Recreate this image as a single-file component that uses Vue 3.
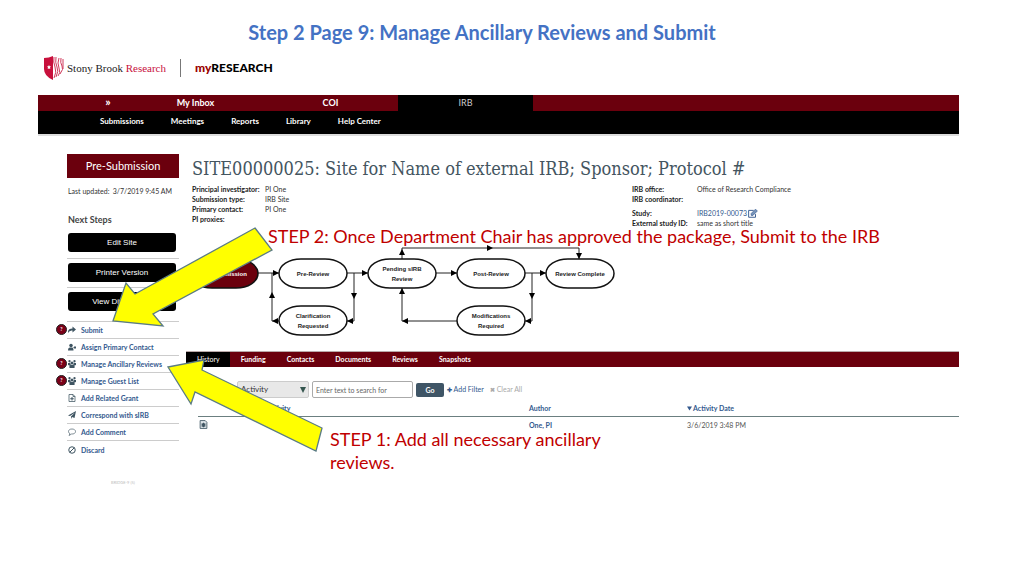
<script setup>
import { ref } from 'vue'

const mainTabs = ['My Inbox', 'COI', 'IRB']
const menu = ['Submissions', 'Meetings', 'Reports', 'Library', 'Help Center']
const steps = ['Edit Site', 'Printer Version', 'View Differences']
const actions = [
  { label: 'Submit', icon: 'share', help: true },
  { label: 'Assign Primary Contact', icon: 'userplus' },
  { label: 'Manage Ancillary Reviews', icon: 'users', help: true },
  { label: 'Manage Guest List', icon: 'users', help: true },
  { label: 'Add Related Grant', icon: 'fileplus' },
  { label: 'Correspond with sIRB', icon: 'plane' },
  { label: 'Add Comment', icon: 'comment' },
  { label: 'Discard', icon: 'ban' }
]
const leftFacts = [
  ['Principal investigator:', 'PI One'],
  ['Submission type:', 'IRB Site'],
  ['Primary contact:', 'PI One'],
  ['PI proxies:', '']
]
const nodes = [
  { x: 190, y: 259, lines: ['Pre-Submission'], active: true },
  { x: 279, y: 259, lines: ['Pre-Review'] },
  { x: 279, y: 306, lines: ['Clarification', 'Requested'] },
  { x: 368, y: 259, lines: ['Pending sIRB', 'Review'] },
  { x: 457, y: 259, lines: ['Post-Review'] },
  { x: 457, y: 306, lines: ['Modifications', 'Required'] },
  { x: 546, y: 259, lines: ['Review Complete'] }
]
const heads = [
  [279, 273, 0], [272, 292, 270], [272, 321, 180], [368, 273, 0], [354, 299, 90], [347, 321, 180],
  [402, 249, 270], [493, 248, 0], [579, 259, 90], [457, 273, 0], [546, 273, 0], [532, 299, 90],
  [525, 321, 180], [402, 321, 180], [402, 288, 270]
]
const tabs = ['History', 'Funding', 'Contacts', 'Documents', 'Reviews', 'Snapshots']
const field = ref('Activity')
const query = ref('')
</script>

<template>
  <div class="slide">
    <h1 class="slide-title">Step 2 Page 9: Manage Ancillary Reviews and Submit</h1>
    <div class="site">
      <header class="brand">
        <svg class="shield" viewBox="0 0 20 24" aria-hidden="true">
          <path d="M0 2Q5 2 9 0V24Q0 20 0 13Z" fill="#c8103c" />
          <path d="M9 0Q14 2 19 2V13Q19 20 9 24Z" fill="#fff" />
          <path d="M10 1Q9 6 11 11T10 22M12 1Q11 7 13 11T12 21M15 2Q13 7 15 12T14 20M17 2Q16 7 18 10T16 18M19 3V13" fill="none" stroke="#d03a5c" />
          <path d="M5 9l.7 1.300 1.300.2-1 1 .3 1.500L5 12.400 3.700 13 4 11.500 3 10.500 4.300 10.300Z" fill="#fff" />
        </svg>
        <span class="sb">Stony Brook <span>Research</span></span>
        <span class="my"><span>my</span>RESEARCH</span>
      </header>
      <nav class="topnav">
        <a href="#" class="expand">»</a>
        <a v-for="t in mainTabs" :key="t" href="#" :class="{ on: t === 'IRB' }">{{ t }}</a>
      </nav>
      <nav class="subnav">
        <a v-for="m in menu" :key="m" href="#">{{ m }}</a>
      </nav>
      <div class="body">
        <aside class="side">
          <div class="state">Pre-Submission</div>
          <div class="updated"><span>Last updated:</span><span>3/7/2019 9:45 AM</span></div>
          <h2>Next Steps</h2>
          <div v-for="s in steps" :key="s" class="step"><button type="button">{{ s }}</button></div>
          <ul class="actions">
            <li v-for="a in actions" :key="a.label">
              <span v-if="a.help" class="help">?</span>
              <svg class="ico" viewBox="0 0 16 16" aria-hidden="true">
                <path v-if="a.icon === 'share'" d="M0 14Q-1 5 9 5V1L16 7 9 13V9Q3 8 0 14Z" fill="#3f5562" />
                <g v-else-if="a.icon === 'userplus'" fill="#3f5562"><circle cx="6" cy="5" r="3.500" /><path d="M0 15Q0 9 4 9H8Q11 9 11 15ZM11 8h2V6h2v2h1v2h-1v2h-2v-2h-2Z" /></g>
                <g v-else-if="a.icon === 'users'" fill="#3f5562"><circle cx="3" cy="2.500" r="2.300" /><circle cx="13" cy="2.500" r="2.300" /><circle cx="8" cy="6" r="3" /><path d="M0 10V6H4L6 9 3 11ZM16 10V6H12L10 9 13 11ZM3 16Q2 10 5 10H11Q14 10 13 16Z" /></g>
                <g v-else-if="a.icon === 'fileplus'" fill="none" stroke="#3f5562" stroke-width="1.500"><path d="M2 1H10L14 5V15H2ZM10 1V5H14" /><path d="M8 6V13M4.500 9.500H11.500" stroke-width="2" /></g>
                <path v-else-if="a.icon === 'plane'" d="M16 0 13 14 8 12 6 16V11L14 3 4 10 0 9Z" fill="#3f5562" />
                <path v-else-if="a.icon === 'comment'" d="M8 2C3 2 1 4.500 1 7Q1 10 4 11.500L2 15 7 12C12 12.500 15 10 15 7S12 2 8 2Z" fill="none" stroke="#3f5562" stroke-width="1.300" />
                <g v-else fill="none" stroke="#3f5562" stroke-width="2"><circle cx="8" cy="8" r="6.500" /><path d="M3.500 12.500 12.500 3.500" /></g>
              </svg>
              <a href="#">{{ a.label }}</a>
            </li>
          </ul>
          <div class="version">BRIDGE-9 (5)</div>
        </aside>
        <main>
          <h2 class="site-name">SITE00000025: Site for Name of external IRB; Sponsor; Protocol #</h2>
          <div class="facts">
            <dl class="left">
              <template v-for="f in leftFacts" :key="f[0]"><dt>{{ f[0] }}</dt><dd>{{ f[1] }}</dd></template>
            </dl>
            <div>
              <dl class="right">
                <dt>IRB office:</dt><dd>Office of Research Compliance</dd>
                <dt>IRB coordinator:</dt><dd></dd>
              </dl>
              <dl class="right second">
                <dt>Study:</dt>
                <dd class="study"><a href="#">IRB2019-00073</a>
                  <svg viewBox="0 0 16 14" aria-hidden="true"><path d="M12 8V13H1V2H9" fill="none" stroke="#33598e" stroke-width="1.500" /><path d="M5 10V7L12 0 15 3 8 10Z" fill="#7895bb" stroke="#33598e" /></svg>
                </dd>
                <dt>External study ID:</dt><dd>same as short title</dd>
              </dl>
            </div>
          </div>
          <svg class="flow" viewBox="186 240 440 106" role="img" aria-label="Review workflow">
            <path class="wire" d="M258 273H279M347 273H368M436 273H457M525 273H546M279 321H272V273M354 273V321H347M402 259V248H579V259M532 273V321H525M457 321H402V288" />
            <path v-for="(h, i) in heads" :key="i" d="M0 0L-6 -3V3Z" :transform="`translate(${h[0]} ${h[1]}) rotate(${h[2]})`" />
            <g v-for="n in nodes" :key="n.lines[0]" :class="['node', { active: n.active }]">
              <rect :x="n.x" :y="n.y" width="68" height="29" rx="22" ry="15" />
              <text v-for="(l, i) in n.lines" :key="l" :x="n.x + 34" :y="n.y + (n.lines.length > 1 ? 12 + i * 10 : 17)">{{ l }}</text>
            </g>
          </svg>
          <nav class="tabs">
            <a v-for="t in tabs" :key="t" href="#" :class="{ on: t === 'History' }">{{ t }}</a>
          </nav>
          <form class="filter" @submit.prevent>
            <label for="field">Filter by <span class="tip">?</span></label>
            <div class="pick">
              <select id="field" v-model="field"><option>Activity</option></select>
              <svg viewBox="0 0 6 6" aria-hidden="true"><path d="M0 0H6L3 6Z" fill="#35564f" /></svg>
            </div>
            <input v-model="query" type="text" aria-label="Search text" placeholder="Enter text to search for" />
            <button type="submit">Go</button>
            <a href="#"><b>✚</b> Add Filter</a>
            <a href="#" class="off"><b>✖</b> Clear All</a>
          </form>
          <table>
            <colgroup><col class="c1" /><col class="c2" /><col class="c3" /><col /></colgroup>
            <thead>
              <tr><th></th><th><a href="#">Activity</a></th><th><a href="#">Author</a></th>
                <th><a href="#"><svg class="sort" viewBox="0 0 6 5" aria-hidden="true"><path d="M0 0H6L3 5Z" fill="#33598e" /></svg>Activity Date</a></th></tr>
            </thead>
            <tbody>
              <tr>
                <td><svg class="doc" viewBox="0 0 16 16" aria-hidden="true"><path d="M2 1H11L14 4V15H2Z" fill="#dfe5e9" stroke="#3f5562" stroke-width="1.500" /><path d="M8 5V13M4 9H12M5 6 11 12M11 6 5 12" stroke="#3f5562" stroke-width="1.800" /></svg></td>
                <td></td><td><a href="#">One, PI</a></td><td class="date">3/6/2019 3:48 PM</td>
              </tr>
            </tbody>
          </table>
        </main>
      </div>
    </div>
    <svg class="arrows" width="340" height="460" viewBox="0 0 340 460" aria-hidden="true">
      <path d="M255 228L272 250 153 314 163 326 113 321 126 283 135 294Z" />
      <path d="M168 367L204 360 202 370 322 428 316 451 195 392 191 404Z" />
    </svg>
    <p class="note two">STEP 2: Once Department Chair has approved the package, Submit to the IRB</p>
    <p class="note one">STEP 1: Add all necessary ancillary reviews.</p>
  </div>
</template>

<style>
body { background: #fff; }
</style>

<style scoped>
* { box-sizing: border-box; }
.slide { position: relative; min-height: 100vh; font: 7px/10px Lato, "Open Sans", sans-serif; color: #333; }
h1, h2, p, dl, dd, ul { margin: 0; padding: 0; }
a { color: #33598e; text-decoration: none; }
.slide-title { padding: 20px 60px 0 0; text-align: center; font-size: 20px; line-height: 24px; color: #4472c4; }
.site { margin: 0 65px 0 38px; }
.brand { display: flex; align-items: center; height: 51px; padding: 0 0 3px 6px; }
.shield { width: 20px; height: 24px; }
.sb { margin-left: 3px; padding-right: 14px; border-right: 1px solid #777; font: 11px/18px "Liberation Serif", serif; color: #222; }
.sb span { color: #c8103c; }
.my { margin-left: 14px; font: 900 12px/18px Lato, sans-serif; color: #000; }
.my span { color: #900; }
.topnav { display: flex; height: 16px; background: #6b000d; }
.topnav a { width: 135px; text-align: center; color: #fff; font-size: 9px; font-weight: 700; line-height: 16px; }
.topnav .expand { width: 90px; padding-left: 50px; font-size: 12px; line-height: 14px; }
.topnav .on { background: #000; color: #ccc; font-weight: 400; }
.subnav { display: flex; gap: 27px; height: 25px; padding-left: 62px; background: #000; border-bottom: 2px solid #ddd; }
.subnav a { color: #fff; font-size: 8px; font-weight: 700; line-height: 21px; }
.body { display: flex; }
.side { flex: none; width: 148px; padding: 18px 7px 0 29px; }
.state { height: 24px; background: #6b000d; color: #fff; font-size: 11px; line-height: 24px; text-align: center; }
.updated { display: flex; justify-content: space-between; padding: 8px 7px 0 1px; }
.side h2 { padding: 18px 0 7px 1px; font-size: 9px; line-height: 12px; color: #444; }
.step { height: 29px; padding: 0 3px 0 1px; }
.step + .step { border-top: 1px solid #ccc; padding-top: 4px; }
.step:nth-of-type(3) { height: 25px; }
.step button { display: block; width: 100%; height: 19px; padding: 0; border: 0; border-radius: 3px; background: #000; color: #fff; font: 8px/19px "Liberation Sans", sans-serif; }
.actions { list-style: none; margin-top: 5px; border-top: 1px solid #ccc; }
.actions li { position: relative; display: flex; align-items: center; gap: 5px; height: 17px; padding-left: 1px; border-bottom: 1px solid #ccc; font-size: 7px; font-weight: 700; }
.actions li:last-child { border-bottom: 0; }
.ico { width: 8px; height: 8px; }
.help { position: absolute; left: -11px; top: 2px; width: 11px; height: 11px; border: 1px solid #222; border-radius: 50%; background: #7a0018; color: #fff; font-size: 5px; line-height: 9px; text-align: center; }
.version { margin-top: 20px; text-align: center; font-size: 4px; color: #bbb; }
main { flex: 1; min-width: 0; }
.site-name { padding: 20px 0 0 6px; font: 18px/26px "DejaVu Serif Condensed", "DejaVu Serif", serif; color: #44555f; white-space: nowrap; }
.facts { display: grid; grid-template-columns: 440px 1fr; padding: 2px 0 0 6px; }
dl { display: grid; line-height: 10px; }
dt { font-weight: 700; color: #222; white-space: nowrap; }
.left { grid-template-columns: 73px 1fr; grid-auto-rows: 10px; }
.right { grid-template-columns: 65px 1fr; grid-auto-rows: 10px; }
.second { margin-top: 4px; }
.study { display: flex; align-items: center; gap: 1px; }
.study svg { width: 10px; height: 9px; }
.flow { display: block; width: 440px; height: 106px; margin: 12px 0 5px; }
.wire { fill: none; stroke: #222; }
.node rect { fill: #fff; stroke: #111; stroke-width: 1.5; }
.node text { font: 700 6px "Liberation Sans", sans-serif; text-anchor: middle; fill: #222; }
.node.active rect { fill: #6b000d; }
.node.active text { fill: #fff; }
.tabs { display: flex; height: 16px; background: #6b000d; border-top: 1px solid #b9a9a9; }
.tabs a { padding: 0 10px 0 11px; color: #fff; font-weight: 700; line-height: 15px; }
.tabs .on { background: #000; font-weight: 400; }
.filter { display: flex; align-items: center; gap: 3px; padding: 14px 0 0 12px; }
.filter label { width: 36px; white-space: nowrap; }
.tip { display: inline-block; width: 7px; height: 7px; border-radius: 50%; background: #333; color: #fff; font-size: 5px; line-height: 7px; text-align: center; vertical-align: top; }
.pick { position: relative; width: 72px; }
.pick select { display: block; width: 100%; height: 17px; padding: 0 3px; appearance: none; border: 1px solid #ccc; border-radius: 2px; background: #e8e8e8; color: #333; font: 8px/15px Lato, sans-serif; }
.pick svg { position: absolute; right: 3px; top: 6px; width: 6px; height: 6px; }
.filter input { width: 101px; height: 17px; padding: 0 3px; border: 1px solid #aaa; border-radius: 2px; font: 7px/15px Lato, sans-serif; }
.filter input::placeholder { color: #666; }
.filter button { width: 28px; height: 14px; padding: 0; border: 0; border-radius: 2px; background: #3f5566; color: #fff; font: 700 7px/14px Lato, sans-serif; }
.filter .off { margin-left: 3px; color: #aaa; }
.filter b { font-size: 6px; }
table { width: calc(100% - 12px); margin: 2px 0 0 12px; border-collapse: collapse; table-layout: fixed; }
.c1 { width: 68px; }
.c2 { width: 263px; }
.c3 { width: 158px; }
th, td { height: 16px; padding: 0; text-align: left; }
th { border-bottom: 1px solid #6b7f80; font-size: 7px; }
td { height: 17px; }
td a { font-weight: 700; }
.date { color: #555; }
.sort { width: 5px; height: 5px; margin-right: 1px; vertical-align: middle; }
.doc { display: block; width: 9px; height: 9px; margin-left: 1px; }
.arrows { position: absolute; left: 0; top: 0; }
.arrows path { fill: #ff0; stroke: #5b7c84; stroke-width: 1.3; }
.note { position: absolute; color: #c00000; font-size: 18px; line-height: 23px; }
.two { left: 268px; top: 225px; white-space: nowrap; }
.one { left: 330px; top: 428px; width: 290px; }
</style>
